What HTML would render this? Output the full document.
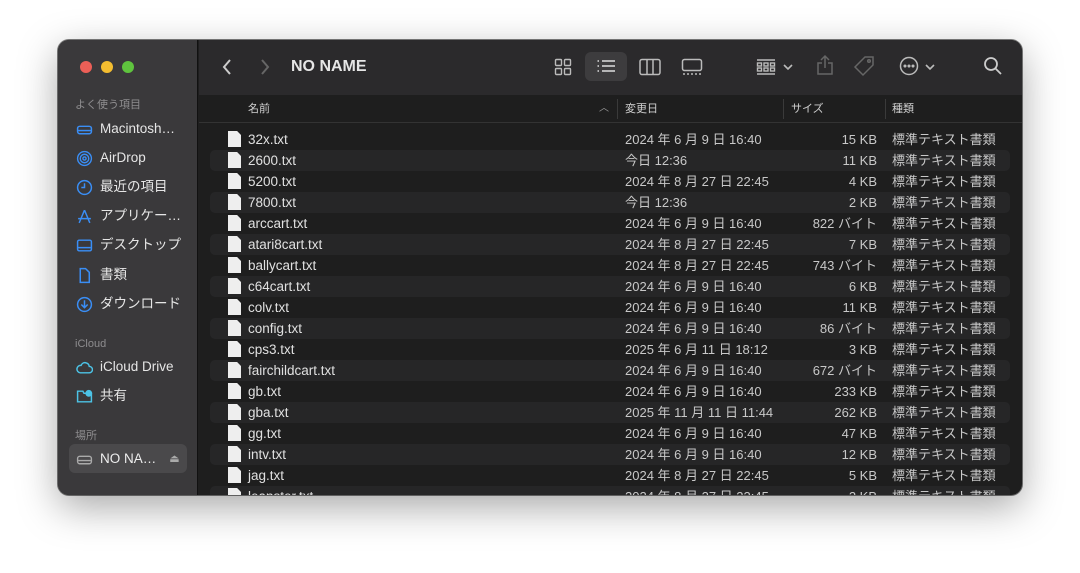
<!DOCTYPE html><html><head><meta charset="utf-8"><style>
*{margin:0;padding:0;box-sizing:border-box}
body{width:1080px;height:573px;background:#fff;font-family:"Liberation Sans","Noto Sans CJK JP",sans-serif;position:relative;overflow:hidden}
.win{position:absolute;left:58px;top:40px;width:964px;height:455px;border-radius:11px;overflow:hidden;background:#1e1e1e;box-shadow:0 12px 40px rgba(0,0,0,.35),0 0 0 1px rgba(0,0,0,.5)}
.side{position:absolute;left:0;top:0;width:140px;height:455px;background:#3a393b;border-right:1px solid #111}
.dot{position:absolute;top:21px;width:12px;height:12px;border-radius:6px}
.sh{position:absolute;left:17px;font-size:11px;color:#8e8d8f;line-height:14px}
.si{position:absolute;left:18px;font-size:13.5px;line-height:18px;color:#e6e6e6;display:flex;align-items:center;gap:7px}
.si svg{width:17px;height:17px}
.tb{position:absolute;left:141px;top:0;right:0;height:55px;background:#2b2a2c}
.hd{position:absolute;left:141px;top:55px;right:0;height:28px;background:#1e1e1e;border-bottom:1px solid #333;font-size:11px;color:#cfcfcf}
.hd span{position:absolute;top:7px;line-height:14px}
.sep{position:absolute;top:4px;width:1px;height:20px;background:#3a3a3a}
.rows{position:absolute;left:141px;top:89px;right:0;bottom:0}
.r{position:absolute;left:11px;width:800px;height:21px;font-size:13.5px;color:#e0e0e0;border-radius:5px}
.r.a{background:#262627}
.r span{position:absolute;top:3px;line-height:16px;white-space:nowrap}
.ic{position:absolute;left:18px;top:2px;width:13px;height:16px;background:#eee;clip-path:polygon(0 0,70% 0,100% 25%,100% 100%,0 100%)}
.d{left:415px;color:#c8c8c8;font-size:13px}.s{right:133px;color:#c8c8c8;font-size:13px}.k{left:682px;color:#c8c8c8;font-size:13px}
.n{left:38px}
</style></head><body>
<div class="win">
<div class="side">
<div class="dot" style="left:22px;background:#ec5f57"></div>
<div class="dot" style="left:43px;background:#f4bd30"></div>
<div class="dot" style="left:64px;background:#5fc43e"></div>
<div class="sh" style="top:58px">よく使う項目</div>
<div class="si" style="top:80px"><svg viewBox="0 0 16 16" fill="none" stroke="#3a8ef5" stroke-width="1.4"><rect x="1.5" y="5" width="13" height="7" rx="2"/><path d="M2 9h12"/></svg>Macintosh…</div>
<div class="si" style="top:109px"><svg viewBox="0 0 16 16" fill="none" stroke="#3a8ef5" stroke-width="1.3"><circle cx="8" cy="8" r="6.5"/><circle cx="8" cy="8" r="4"/><circle cx="8" cy="8" r="1.5"/></svg>AirDrop</div>
<div class="si" style="top:138px"><svg viewBox="0 0 16 16" fill="none" stroke="#3a8ef5" stroke-width="1.4"><circle cx="8" cy="8" r="6.5"/><path d="M8 4v4H5"/></svg>最近の項目</div>
<div class="si" style="top:167px"><svg viewBox="0 0 16 16" fill="none" stroke="#3a8ef5" stroke-width="1.4"><path d="M8 2L3 14M8 2l5 12M2 10h12"/></svg>アプリケー…</div>
<div class="si" style="top:196px"><svg viewBox="0 0 16 16" fill="none" stroke="#3a8ef5" stroke-width="1.4"><rect x="1.5" y="3" width="13" height="10" rx="1.5"/><path d="M2 10h12"/></svg>デスクトップ</div>
<div class="si" style="top:226px"><svg viewBox="0 0 16 16" fill="none" stroke="#3a8ef5" stroke-width="1.4"><path d="M4 1.5h5l3.5 3.5v9.5h-8.5z"/></svg>書類</div>
<div class="si" style="top:255px"><svg viewBox="0 0 16 16" fill="none" stroke="#3a8ef5" stroke-width="1.4"><circle cx="8" cy="8" r="6.5"/><path d="M8 4v7M5 8l3 3 3-3"/></svg>ダウンロード</div>
<div class="sh" style="top:297px">iCloud</div>
<div class="si" style="top:318px"><svg viewBox="0 0 16 16" fill="none" stroke="#4cc3e6" stroke-width="1.4"><path d="M4 13h8.5a3 3 0 000-6 4 4 0 00-7.7-1A3.5 3.5 0 004 13z"/></svg>iCloud Drive</div>
<div class="si" style="top:347px"><svg viewBox="0 0 16 16" fill="none" stroke="#4cc3e6" stroke-width="1.4"><path d="M1.5 3h5l1 2h7v8h-13z"/><circle cx="12" cy="5" r="2.5" fill="#4cc3e6"/></svg>共有</div>
<div class="sh" style="top:389px">場所</div>
<div style="position:absolute;left:11px;top:404px;width:118px;height:29px;background:#4a494b;border-radius:6px"></div>
<div class="si" style="top:410px;color:#eee"><svg viewBox="0 0 16 16" fill="none" stroke="#aaa" stroke-width="1.3"><rect x="1.5" y="5" width="13" height="7" rx="2"/><path d="M2 9h12"/></svg>NO NA…<span style="margin-left:6px;font-size:11px;color:#aaa">⏏</span></div>
</div>
<div class="tb">
<svg style="position:absolute;left:22px;top:18px" width="12" height="18" viewBox="0 0 12 18" fill="none" stroke="#ccc" stroke-width="2"><path d="M9 2L3 9l6 7"/></svg>
<svg style="position:absolute;left:60px;top:18px" width="12" height="18" viewBox="0 0 12 18" fill="none" stroke="#666" stroke-width="2"><path d="M3 2l6 7-6 7"/></svg>
<div style="position:absolute;left:92px;top:17px;font-size:16px;line-height:20px;font-weight:bold;color:#e6e6e6">NO NAME</div>
<svg style="position:absolute;left:355px;top:18px" width="18" height="18" viewBox="0 0 18 18" fill="none" stroke="#bbb" stroke-width="1.4"><rect x="1.5" y="1.5" width="6" height="6" rx="1"/><rect x="10.5" y="1.5" width="6" height="6" rx="1"/><rect x="1.5" y="10.5" width="6" height="6" rx="1"/><rect x="10.5" y="10.5" width="6" height="6" rx="1"/></svg>
<div style="position:absolute;left:386px;top:12px;width:42px;height:29px;background:#3d3c3e;border-radius:6px"></div>
<svg style="position:absolute;left:397px;top:18px" width="20" height="16" viewBox="0 0 20 16" fill="none" stroke="#ddd" stroke-width="1.6"><path d="M6 3h13M6 8h13M6 13h13M1.5 3h1.5M1.5 8h1.5M1.5 13h1.5"/></svg>
<svg style="position:absolute;left:440px;top:18px" width="22" height="18" viewBox="0 0 22 18" fill="none" stroke="#bbb" stroke-width="1.5"><rect x="1" y="1.5" width="20" height="15" rx="2"/><path d="M8 2v14M14 2v14"/></svg>
<svg style="position:absolute;left:482px;top:18px" width="22" height="18" viewBox="0 0 22 18" fill="none" stroke="#bbb" stroke-width="1.5"><rect x="1.5" y="1.5" width="19" height="11" rx="2"/><path d="M2 16h2M6 16h2M10 16h2M14 16h2M18 16h2"/></svg>
<svg style="position:absolute;left:557px;top:18px" width="20" height="18" viewBox="0 0 20 18" fill="none" stroke="#bbb" stroke-width="1.4"><path d="M1 2h18M1 16h18"/><rect x="1.5" y="5" width="4" height="3"/><rect x="8" y="5" width="4" height="3"/><rect x="14.5" y="5" width="4" height="3"/><rect x="1.5" y="10" width="4" height="3"/><rect x="8" y="10" width="4" height="3"/><rect x="14.5" y="10" width="4" height="3"/></svg>
<svg style="position:absolute;left:584px;top:23px" width="10" height="8" viewBox="0 0 10 8" fill="none" stroke="#bbb" stroke-width="1.6"><path d="M1 2l4 4 4-4"/></svg>
<svg style="position:absolute;left:617px;top:14px" width="18" height="22" viewBox="0 0 18 22" fill="none" stroke="#666" stroke-width="1.5"><path d="M9 2v12M5 6l4-4 4 4M6 9H2v11h14V9h-4"/></svg>
<svg style="position:absolute;left:654px;top:15px" width="22" height="22" viewBox="0 0 22 22" fill="none" stroke="#666" stroke-width="1.5"><path d="M12 2h8v8L10 20 2 12z"/><circle cx="16" cy="6" r="1.3"/></svg>
<svg style="position:absolute;left:700px;top:16px" width="20" height="20" viewBox="0 0 20 20" fill="none" stroke="#bbb" stroke-width="1.5"><circle cx="10" cy="10" r="8.5"/><circle cx="6" cy="10" r=".8" fill="#bbb"/><circle cx="10" cy="10" r=".8" fill="#bbb"/><circle cx="14" cy="10" r=".8" fill="#bbb"/></svg>
<svg style="position:absolute;left:726px;top:23px" width="10" height="8" viewBox="0 0 10 8" fill="none" stroke="#bbb" stroke-width="1.6"><path d="M1 2l4 4 4-4"/></svg>
<svg style="position:absolute;left:784px;top:16px" width="20" height="20" viewBox="0 0 20 20" fill="none" stroke="#ccc" stroke-width="1.8"><circle cx="8" cy="8" r="6"/><path d="M12.5 12.5L18 18"/></svg>
</div>
<div class="hd">
<span style="left:49px">名前</span>
<span style="left:400px;color:#999;font-size:10px;top:7px">︿</span>
<div class="sep" style="left:418px"></div>
<span style="left:426px">変更日</span>
<div class="sep" style="left:584px"></div>
<span style="left:592px">サイズ</span>
<div class="sep" style="left:686px"></div>
<span style="left:693px">種類</span>
</div>
<div class="rows">
<div class="r" style="top:0"><i class="ic"></i><span class="n">32x.txt</span><span class="d">2024 年 6 月 9 日 16:40</span><span class="s">15 KB</span><span class="k">標準テキスト書類</span></div>
<div class="r a" style="top:21px"><i class="ic"></i><span class="n">2600.txt</span><span class="d">今日 12:36</span><span class="s">11 KB</span><span class="k">標準テキスト書類</span></div>
<div class="r" style="top:42px"><i class="ic"></i><span class="n">5200.txt</span><span class="d">2024 年 8 月 27 日 22:45</span><span class="s">4 KB</span><span class="k">標準テキスト書類</span></div>
<div class="r a" style="top:63px"><i class="ic"></i><span class="n">7800.txt</span><span class="d">今日 12:36</span><span class="s">2 KB</span><span class="k">標準テキスト書類</span></div>
<div class="r" style="top:84px"><i class="ic"></i><span class="n">arccart.txt</span><span class="d">2024 年 6 月 9 日 16:40</span><span class="s">822 バイト</span><span class="k">標準テキスト書類</span></div>
<div class="r a" style="top:105px"><i class="ic"></i><span class="n">atari8cart.txt</span><span class="d">2024 年 8 月 27 日 22:45</span><span class="s">7 KB</span><span class="k">標準テキスト書類</span></div>
<div class="r" style="top:126px"><i class="ic"></i><span class="n">ballycart.txt</span><span class="d">2024 年 8 月 27 日 22:45</span><span class="s">743 バイト</span><span class="k">標準テキスト書類</span></div>
<div class="r a" style="top:147px"><i class="ic"></i><span class="n">c64cart.txt</span><span class="d">2024 年 6 月 9 日 16:40</span><span class="s">6 KB</span><span class="k">標準テキスト書類</span></div>
<div class="r" style="top:168px"><i class="ic"></i><span class="n">colv.txt</span><span class="d">2024 年 6 月 9 日 16:40</span><span class="s">11 KB</span><span class="k">標準テキスト書類</span></div>
<div class="r a" style="top:189px"><i class="ic"></i><span class="n">config.txt</span><span class="d">2024 年 6 月 9 日 16:40</span><span class="s">86 バイト</span><span class="k">標準テキスト書類</span></div>
<div class="r" style="top:210px"><i class="ic"></i><span class="n">cps3.txt</span><span class="d">2025 年 6 月 11 日 18:12</span><span class="s">3 KB</span><span class="k">標準テキスト書類</span></div>
<div class="r a" style="top:231px"><i class="ic"></i><span class="n">fairchildcart.txt</span><span class="d">2024 年 6 月 9 日 16:40</span><span class="s">672 バイト</span><span class="k">標準テキスト書類</span></div>
<div class="r" style="top:252px"><i class="ic"></i><span class="n">gb.txt</span><span class="d">2024 年 6 月 9 日 16:40</span><span class="s">233 KB</span><span class="k">標準テキスト書類</span></div>
<div class="r a" style="top:273px"><i class="ic"></i><span class="n">gba.txt</span><span class="d">2025 年 11 月 11 日 11:44</span><span class="s">262 KB</span><span class="k">標準テキスト書類</span></div>
<div class="r" style="top:294px"><i class="ic"></i><span class="n">gg.txt</span><span class="d">2024 年 6 月 9 日 16:40</span><span class="s">47 KB</span><span class="k">標準テキスト書類</span></div>
<div class="r a" style="top:315px"><i class="ic"></i><span class="n">intv.txt</span><span class="d">2024 年 6 月 9 日 16:40</span><span class="s">12 KB</span><span class="k">標準テキスト書類</span></div>
<div class="r" style="top:336px"><i class="ic"></i><span class="n">jag.txt</span><span class="d">2024 年 8 月 27 日 22:45</span><span class="s">5 KB</span><span class="k">標準テキスト書類</span></div>
<div class="r a" style="top:357px"><i class="ic"></i><span class="n">leapster.txt</span><span class="d">2024 年 8 月 27 日 22:45</span><span class="s">2 KB</span><span class="k">標準テキスト書類</span></div>
</div>
</div>
</body></html>
